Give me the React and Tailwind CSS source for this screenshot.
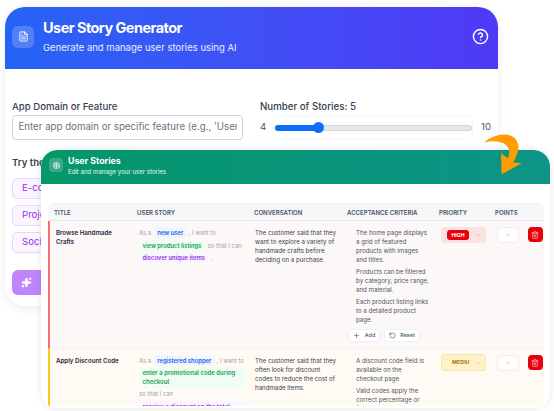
import React from "react";
import { FileText, CircleHelp, Table, Trash2, ChevronDown, Plus, RotateCcw, Sparkles } from "lucide-react";

const Pill = ({ c, children }) => <span className={`rounded-[3px] px-[3.5px] py-[2px] font-semibold ${c}`}>{children}</span>;
const blue = "bg-[#eff6ff] text-[#2563eb]";
const green = "bg-[#f0fdf4] text-[#16a34a]";
const purple = "bg-[#faf5ff] text-[#9333ea]";

const Crit = ({ items }) => (
  <ul className="flex flex-col gap-[3px]">
    {items.map((t) => (
      <li key={t} className="flex text-[#4b5563]">
        <span className="w-[7px] shrink-0 text-[#9ca3af]">.</span>
        <span className="w-[73px]">{t}</span>
      </li>
    ))}
  </ul>
);

const Del = () => (
  <div className="flex h-[15px] w-[14.5px] items-center justify-center rounded-[4px] bg-[#e7000b]">
    <Trash2 size={8} className="text-white/80" />
  </div>
);

const Points = () => (
  <div className="flex h-[16px] w-[22px] items-center justify-center rounded-[3px] border border-[#eceef0] bg-white/60">
    <ChevronDown size={6} className="text-[#9ca3af]" />
  </div>
);

const Row = ({ accent, bg, title, story, conv, crit, priority, actions, h }) => (
  <div className={`grid grid-cols-[84px_116px_93px_92px_56px_32px_1fr] border-b border-[#f1f1f1] border-l-2 text-[6.15px] leading-[9px] ${accent} ${bg} ${h}`}>
    <div className="pl-[6px] pt-[7px] pr-[8px] font-semibold text-[#1f2937]">{title}</div>
    <div className="pl-[5px] pr-[5px] pt-[6px]">{story}</div>
    <div className="w-[87px] pl-[5px] pt-[7px] text-[#374151]">{conv}</div>
    <div className="pl-[6px] pt-[7px]">
      {crit}
      {actions}
    </div>
    <div className="pl-[6px] pt-[6px]">{priority}</div>
    <div className="pl-[6px] pt-[6px]"><Points /></div>
    <div className="pl-[5px] pt-[6px]"><Del /></div>
  </div>
);

export default function App() {
  return (
    <div className="relative h-[411px] w-[554px] overflow-hidden bg-white font-['Inter',sans-serif]">
      {/* back window */}
      <div className="absolute left-[5px] top-[7px] h-[299px] w-[493px] rounded-[20px] bg-white shadow-[0_2px_10px_rgba(0,0,0,0.08)]">
        <div className="flex h-[62px] items-center rounded-t-[20px] bg-gradient-to-r from-[#2463f5] to-[#4f39f6] pb-[3px] pl-[7px] pr-[9px]">
          <div className="flex h-[22px] w-[22px] items-center justify-center rounded-[6px] bg-white/20">
            <FileText size={11} className="text-white" />
          </div>
          <div className="ml-[9px] flex-1 text-white">
            <div className="text-[14.5px] font-bold leading-[20px] tracking-[-0.55px]">User Story Generator</div>
            <div className="mt-[3px] text-[9.5px] leading-[14px] text-white/90">Generate and manage user stories using AI</div>
          </div>
          <CircleHelp size={17} className="text-white" />
        </div>
        <div className="flex gap-[17px] px-[7px] pt-[31px]">
          <div className="w-[231px]">
            <div className="text-[9.6px] font-medium leading-[14px] text-[#374151]">App Domain or Feature</div>
            <div className="mt-[1px] flex h-[25px] items-center rounded-[4px] border border-[#d1d5db] px-[5.5px] text-[9.7px] text-[#6b7280]">
              <span className="overflow-hidden whitespace-nowrap">Enter app domain or specific feature (e.g., 'User Authentication')</span>
            </div>
          </div>
          <div className="w-[232px]">
            <div className="text-[9.7px] font-medium leading-[14px] text-[#374151]">Number of Stories: 5</div>
            <div className="mt-[1px] flex h-[25px] items-center text-[9.6px] text-[#4b5563]">
              <span className="w-[14px]">4</span>
              <div className="flex h-[25px] w-[199px] items-center rounded-[6px] border border-[#f5f6fb]">
                <div className="relative h-[6px] w-[197px] rounded-full border border-[#d1d5db] bg-[#e5e7eb]">
                  <div className="absolute -left-px -top-px h-[6px] w-[43px] rounded-full bg-[#0d6efd]" />
                  <div className="absolute left-[37px] top-[-3.5px] h-[11px] w-[11px] rounded-full bg-[#0d6efd]" />
                </div>
              </div>
              <span className="ml-[8px]">10</span>
            </div>
          </div>
        </div>
        <div className="px-[7px] pt-[16px]">
          <div className="text-[9.6px] font-semibold leading-[14px] text-[#374151]">Try these examples:</div>
          <div className="mt-[8px] flex flex-col items-start gap-[6px]">
            {["E-commerce", "Project Management", "Social Media"].map((t) => (
              <div key={t} className="flex h-[21px] items-center rounded-[5px] border border-[#e9d5ff] bg-[#faf5ff] px-[9px] text-[9.6px] text-[#9333ea]">{t}</div>
            ))}
          </div>
          <div className="mt-[17px] flex h-[25px] w-[200px] items-center rounded-[6px] bg-[#c084fc] pl-[9px] text-[10px] text-white">
            <Sparkles size={11} fill="white" />
            <span className="ml-[10px]">Generate Stories</span>
          </div>
        </div>
      </div>

      {/* front window */}
      <div className="absolute left-[41px] top-[150px] h-[258px] w-[509px] overflow-hidden rounded-[16px] bg-white shadow-[0_0_8px_rgba(0,0,0,0.1)]">
        <div className="flex h-[34px] items-center rounded-t-[16px] bg-gradient-to-r from-[#059669] to-[#0d9488] pb-[4px] pl-[8px]">
          <div className="flex h-[14px] w-[14px] items-center justify-center rounded-[4px] bg-white/20">
            <Table size={7} className="text-white" />
          </div>
          <div className="ml-[5px] text-white">
            <div className="text-[8.8px] font-bold leading-[12px]">User Stories</div>
            <div className="text-[6.1px] leading-[9px] text-white/90">Edit and manage your user stories</div>
          </div>
        </div>
        <div className="ml-[7px] mt-[19px] h-[203px] w-[496px] overflow-hidden rounded-t-[5px] border-t border-[#eef0f2]">
          <div className="grid h-[17px] grid-cols-[83px_117px_93px_92px_56px_1fr] items-center border-b border-[#e5e7eb] bg-[#f6f7f9] pl-[6px] pt-px text-[6.05px] font-semibold text-[#4b5563]">
            <span>TITLE</span><span>USER STORY</span><span>CONVERSATION</span><span>ACCEPTANCE CRITERIA</span><span>PRIORITY</span><span>POINTS</span>
          </div>
          <Row
            h="h-[128px]"
            accent="border-l-[#f87171]"
            bg="bg-[#fdf8f8]"
            title="Browse Handmade Crafts"
            conv="The customer said that they want to explore a variety of handmade crafts before deciding on a purchase."
            story={
              <div className="text-[5.9px] leading-[12.6px] text-[#9ca3af] whitespace-nowrap">
                <div>As a <span className="ml-[1px]"><Pill c={blue}>new user</Pill></span> , I want to</div>
                <div><Pill c={green}>view product listings</Pill> <span className="ml-[1px]">so that I can</span></div>
                <div><Pill c={purple}>discover unique items</Pill> <span className="ml-[1px]">.</span></div>
              </div>
            }
            crit={<Crit items={["The home page displays a grid of featured products with images and titles.", "Products can be filtered by category, price range, and material.", "Each product listing links to a detailed product page."]} />}
            actions={
              <div className="-ml-px mt-[5px] flex gap-[4px] text-[5.4px] font-medium text-[#4b5563]">
                <div className="flex h-[13px] w-[32px] items-center justify-center gap-[5px] rounded-[3px] border border-[#eef0f2] bg-white"><Plus size={7} /><span>Add</span></div>
                <div className="flex h-[13px] w-[36px] items-center justify-center gap-[4px] rounded-[3px] border border-[#eef0f2] bg-white"><RotateCcw size={7} /><span>Reset</span></div>
              </div>
            }
            priority={
              <div className="flex h-[16px] w-[45px] items-center rounded-[3px] bg-[#fde2e2] pl-[6px]">
                <span className="flex h-[10px] w-[22px] items-center justify-center rounded-[3px] bg-[#e7000b] text-[5.2px] font-bold text-white">HIGH</span>
                <ChevronDown size={6} className="ml-[6px] text-[#c9a0a0]" />
              </div>
            }
          />
          <Row
            h="h-[100px]"
            accent="border-l-[#facc15]"
            bg="bg-[#fffbf4]"
            title="Apply Discount Code"
            conv="The customer said that they often look for discount codes to reduce the cost of handmade items."
            story={
              <div className="text-[5.9px] leading-[9px] text-[#9ca3af]">
                <div className="whitespace-nowrap leading-[12px]">As a <span className="ml-[1px]"><Pill c={blue}>registered shopper</Pill></span> , I want to</div>
                <div className={`rounded-[3px] px-[3.5px] py-[1px] text-[6px] font-semibold ${green} leading-[9.4px]`}>enter a promotional code during checkout</div>
                <div className="mt-[1.5px] leading-[9px]">so that I can</div>
                <div className={`mt-[3px] rounded-[3px] px-[3.5px] py-[1px] text-[6px] font-semibold ${purple}`}>receive a discount on the total purchase price</div>
              </div>
            }
            crit={<Crit items={["A discount code field is available on the checkout page.", "Valid codes apply the correct percentage or fixed amount discount."]} />}
            priority={
              <div className="-mt-px flex h-[17px] w-[45px] items-center rounded-[3px] border border-[#f5e8b0] bg-[#fef3c7] pl-[10px]">
                <span className="text-[5.4px] font-semibold text-[#a65f00]">MEDIU</span>
                <ChevronDown size={6} className="ml-[6px] text-[#bfa98a]" />
              </div>
            }
          />
        </div>
      </div>

      {/* orange arrow */}
      <svg className="absolute left-[470px] top-[125px]" width="84" height="65" viewBox="0 0 252 195">
        <path d="M42 53 C62 34 92 26 112 29 C136 33 147 52 145 72 C143 88 136 101 129 112 L155 115 L95 148 L93 85 L113 100 C120 86 120 70 108 60 C94 48 66 46 42 53 Z" fill="#ff9d00" />
      </svg>
    </div>
  );
}
